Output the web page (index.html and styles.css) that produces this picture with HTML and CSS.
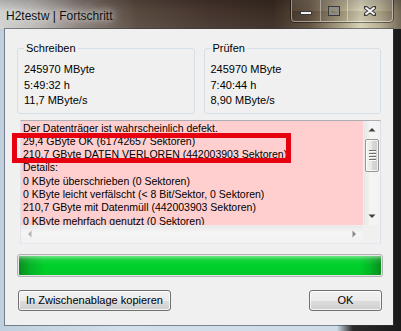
FILE: index.html
```html
<!DOCTYPE html>
<html>
<head>
<meta charset="utf-8">
<link rel="stylesheet" href="styles.css">
</head>
<body>
<div class="window">
  <div class="titlebar">
    <span class="title">H2testw | Fortschritt</span>
    <div class="caption">
      <div class="cbtn cmin"><span class="min-glyph"></span></div>
      <div class="cbtn cmax"><span class="max-glyph"></span></div>
      <div class="cbtn cclose">
        <svg width="12" height="10" viewBox="0 0 12 10"><path d="M1 1 L11 9 M11 1 L1 9" stroke="#3a3a3a" stroke-width="4" stroke-linecap="square"/><path d="M1.5 1.5 L10.5 8.5 M10.5 1.5 L1.5 8.5" stroke="#f4f4f4" stroke-width="2.2"/></svg>
      </div>
    </div>
  </div>
  <div class="client">
    <div class="groups">
      <fieldset class="group">
        <legend>Schreiben</legend>
        <div class="gline">245970 MByte</div>
        <div class="gline">5:49:32 h</div>
        <div class="gline">11,7 MByte/s</div>
      </fieldset>
      <fieldset class="group">
        <legend>Prüfen</legend>
        <div class="gline">245970 MByte</div>
        <div class="gline">7:40:44 h</div>
        <div class="gline">8,90 MByte/s</div>
      </fieldset>
    </div>
    <div class="textbox">
      <div class="text">
        <div class="tline">Der Datenträger ist wahrscheinlich defekt.</div>
        <div class="tline">29,4 GByte OK (61742657 Sektoren)</div>
        <div class="tline">210,7 GByte DATEN VERLOREN (442003903 Sektoren)</div>
        <div class="tline">Details:</div>
        <div class="tline">0 KByte überschrieben (0 Sektoren)</div>
        <div class="tline">0 KByte leicht verfälscht (&lt; 8 Bit/Sektor, 0 Sektoren)</div>
        <div class="tline">210,7 GByte mit Datenmüll (442003903 Sektoren)</div>
        <div class="tline">0 KByte mehrfach genutzt (0 Sektoren)</div>
      </div>
      <div class="vscroll">
        <div class="arrow">
          <svg width="8" height="5" viewBox="0 0 8 5"><path d="M0.5 4.5 L4 1 L7.5 4.5 Z" fill="#404040"/></svg>
        </div>
        <div class="vtrack">
          <div class="thumb"><span class="grip"></span><span class="grip"></span><span class="grip"></span><span class="grip"></span></div>
        </div>
        <div class="arrow">
          <svg width="8" height="5" viewBox="0 0 8 5"><path d="M0.5 0.5 L4 4 L7.5 0.5 Z" fill="#404040"/></svg>
        </div>
      </div>
      <div class="hscroll">
        <div class="harrow">
          <svg width="5" height="8" viewBox="0 0 5 8"><path d="M4.5 0.5 L1 4 L4.5 7.5 Z" fill="#b4b4b4"/></svg>
        </div>
        <div class="harrow">
          <svg width="5" height="8" viewBox="0 0 5 8"><path d="M0.5 0.5 L4 4 L0.5 7.5 Z" fill="#8a8a8a"/></svg>
        </div>
      </div>
      <div class="corner"></div>
    </div>
    <div class="progress"><div class="fill"></div></div>
    <div class="buttons">
      <button class="btn btn-copy">In Zwischenablage kopieren</button>
      <button class="btn btn-ok">OK</button>
    </div>
    <div class="annot"></div>
  </div>
</div>
</body>
</html>
```

FILE: styles.css
```css
html, body {
  margin: 0;
  padding: 0;
  width: 401px;
  height: 331px;
  overflow: hidden;
  background: #1c1c1c;
}

.window {
  width: 401px;
  height: 331px;
  display: flex;
  flex-direction: column;
  font-family: "Liberation Sans", Arial, sans-serif;
  font-size: 11px;
  color: #000;
  background: linear-gradient(to right, #bfcfdd 0%, #d3dfea 30%, #cfdbe6 84%, #2a2a2a 88%, #1a1a1a 100%);
}

.titlebar {
  height: 29px;
  flex: none;
  display: flex;
  justify-content: space-between;
  align-items: flex-start;
  padding-right: 8px;
  background:
    linear-gradient(to bottom, rgba(0,0,0,0.18), rgba(0,0,0,0) 40%, rgba(255,255,255,0.05)),
    linear-gradient(to right, #d2d3d2 0%, #c3c0bc 8%, #8c817a 20%, #58493f 34%, #45352e 52%, #3a2b23 68%, #5d4c3b 77%, #a69c7e 85%, #d6d1b5 90%, #b2a88c 95%, #6f6452 100%);
}

.title {
  font-family: "Liberation Sans", Arial, sans-serif;
  font-size: 12px;
  color: #111;
  padding: 9px 0 0 6px;
  text-shadow: 0 0 6px rgba(235,235,235,0.9), 0 0 10px rgba(220,220,220,0.8), 0 0 14px rgba(210,210,210,0.6);
}

.caption {
  display: flex;
  height: 21px;
  border: 1px solid rgba(255,255,255,0.45);
  border-top: none;
  border-radius: 0 0 4px 4px;
  box-shadow: 0 0 0 1px rgba(0,0,0,0.45);
  overflow: hidden;
}

.cbtn {
  height: 21px;
  display: flex;
  align-items: center;
  justify-content: center;
  background: linear-gradient(to bottom, rgba(255,255,255,0.12), rgba(255,255,255,0.04) 50%, rgba(0,0,0,0.1) 51%, rgba(0,0,0,0.05));
}

.cmin { width: 28px; border-right: 1px solid rgba(255,255,255,0.4); }
.cmax { width: 26px; border-right: 1px solid rgba(255,255,255,0.4); }
.cclose { width: 44px; }

.min-glyph {
  display: block;
  width: 10px;
  height: 2px;
  margin-top: 4px;
  background: #f2f2f2;
  border: 1px solid #3a3a3a;
}

.max-glyph {
  display: block;
  width: 6px;
  height: 4px;
  border: 2px solid #8c8c8c;
  outline: 1px solid #3a3a3a;
}

.client {
  flex: 1;
  margin: 0 8px 6px 5px;
  background: #f0f0f0;
  box-shadow: 0 0 0 1px rgba(50,60,70,0.55);
  padding: 13px 10px 0 12px;
  display: flex;
  flex-direction: column;
  position: relative;
}

.groups {
  display: grid;
  grid-template-columns: 1fr 1fr;
  column-gap: 9px;
  margin-right: 2px;
}

.group {
  margin: 0;
  padding: 7px 6px 4px 6px;
  border: 1px solid #d5dfe5;
  border-radius: 3px;
  min-width: 0;
}

.group legend {
  padding: 0 2px;
  margin-left: 0;
  line-height: 13px;
  font-size: 11px;
}

.gline {
  line-height: 15.5px;
  white-space: nowrap;
}

.textbox {
  margin: 6px 2px 0 3px;
  height: 122px;
  border: 1px solid #b8bcc2;
  border-color: #abadb3 #dbdfe6 #e3e9ef #e2e3ea;
  display: grid;
  grid-template-columns: 1fr 17px;
  grid-template-rows: 104px 18px;
  background: #fff;
}

.text {
  background: #ffcfcf;
  padding: 1px 0 0 2px;
  overflow: hidden;
  font-size: 10.5px;
}

.tline {
  line-height: 13.3px;
  white-space: nowrap;
}

.vscroll {
  display: flex;
  flex-direction: column;
  background: linear-gradient(to right, #e6e6e6, #f5f5f5 40%, #f2f2f2);
  border-left: 1px solid #ededed;
}

.arrow {
  height: 17px;
  flex: none;
  display: flex;
  align-items: center;
  justify-content: center;
}

.vtrack {
  flex: 1;
  padding-top: 1px;
}

.thumb {
  margin: 0 1px;
  height: 33px;
  box-sizing: border-box;
  border: 1px solid #979797;
  border-radius: 2px;
  background: linear-gradient(to right, #f3f3f3, #e8e8e8 50%, #d8d8d8 51%, #cfcfcf);
  box-shadow: inset 0 0 0 1px rgba(255,255,255,0.7);
  display: flex;
  flex-direction: column;
  align-items: center;
  justify-content: center;
  gap: 1px;
}

.grip {
  display: block;
  width: 7px;
  height: 1px;
  background: #6e6e6e;
  border-bottom: 1px solid #fafafa;
}

.hscroll {
  display: flex;
  justify-content: space-between;
  align-items: center;
  background: linear-gradient(to bottom, #e9e9e9, #f5f5f5 40%, #f1f1f1);
  border-top: 1px solid #ededed;
}

.harrow {
  width: 17px;
  height: 17px;
  display: flex;
  align-items: center;
  justify-content: center;
}

.corner {
  background: #f0f0f0;
}

.progress {
  margin-top: 10px;
  height: 23px;
  box-sizing: border-box;
  border: 1px solid #b2b2b2;
  border-radius: 3px;
  background: #e6e6e6;
  padding: 1px;
}

.fill {
  height: 100%;
  border-radius: 1px;
  background:
    linear-gradient(to bottom, rgba(255,255,255,0.45) 0, rgba(255,255,255,0.1) 20%, rgba(255,255,255,0) 45%, rgba(0,0,0,0.03) 100%),
    linear-gradient(to right, #0a8d1f 0%, #05b526 3%, #00d02a 7%, #00d02a 94%, #04b825 97%, #0a8f20 100%);
}

.buttons {
  margin-top: 13px;
  display: flex;
  justify-content: space-between;
  padding: 0 1px;
}

.btn {
  height: 21px;
  margin: 0;
  padding: 0;
  font-family: "Liberation Sans", Arial, sans-serif;
  font-size: 11px;
  color: #000;
  border: 1px solid #707070;
  border-radius: 3px;
  background: linear-gradient(to bottom, #f2f2f2 0%, #ebebeb 50%, #dddddd 51%, #cfcfcf 100%);
  box-shadow: inset 0 0 0 1px rgba(255,255,255,0.75);
}

.btn-copy { width: 153px; }
.btn-ok { width: 73px; }

.annot {
  position: absolute;
  left: 7px;
  top: 104px;
  width: 279px;
  height: 30px;
  box-sizing: border-box;
  border: 5px solid #e60010;
}
```
